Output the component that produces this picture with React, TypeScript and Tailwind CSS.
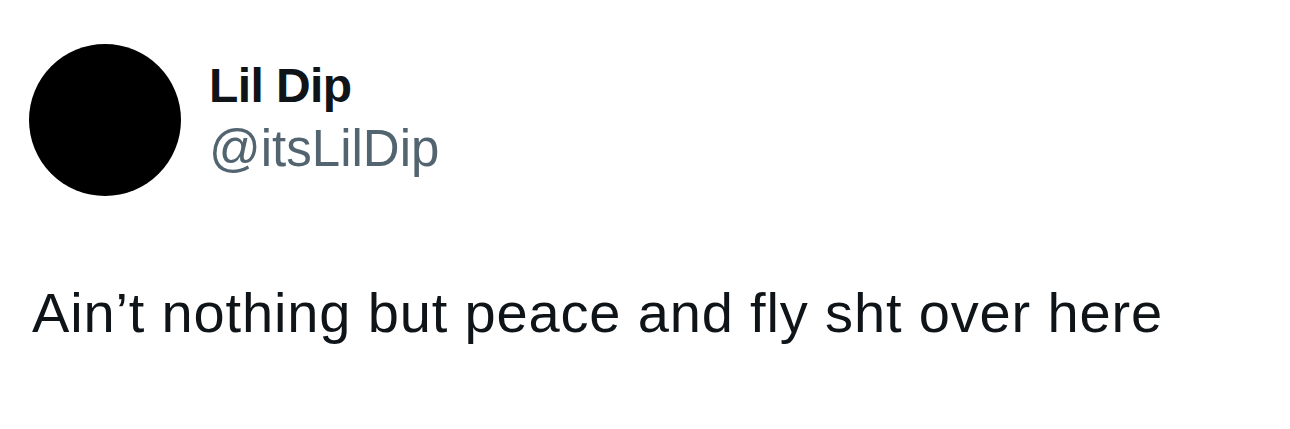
import React from "react";

export default function App() {
  return (
    <div className="w-[1290px] h-[429px] bg-white overflow-hidden" style={{ fontFamily: '"Liberation Sans", Arial, sans-serif' }}>
      <div className="pt-[44px] pl-[29px] flex flex-col">
        <div className="flex items-start">
          <div className="w-[152px] h-[152px] rounded-full bg-black shrink-0" />
          <div className="ml-[28px] mt-[14px] flex flex-col">
            <div className="text-[48px] leading-[56px] font-bold tracking-[-0.6px] text-[#0f1419]">Lil Dip</div>
            <div className="mt-[7px] text-[51px] leading-[56px] text-[#536471]">@itsLilDip</div>
          </div>
        </div>
        <div className="mt-[85px] pl-[3px] text-[56px] leading-[64px] tracking-[0.85px] text-[#0f1419]">Ain’t nothing but peace and fly sht over here</div>
      </div>
    </div>
  );
}
